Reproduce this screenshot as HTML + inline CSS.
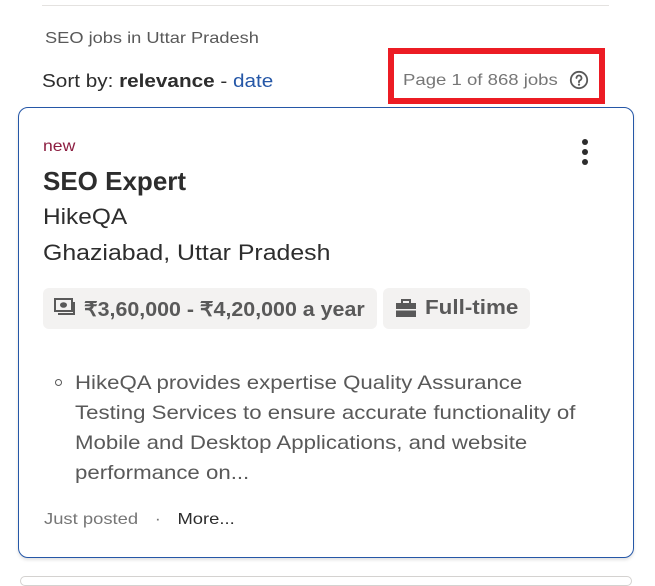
<!DOCTYPE html>
<html><head><meta charset="utf-8"><style>
*{margin:0;padding:0;box-sizing:border-box}
body{width:655px;height:579px;background:#fff;position:relative;overflow:hidden;font-family:"Liberation Sans",sans-serif;color:#2d2d2d}
.a{position:absolute;white-space:nowrap;transform-origin:0 0}
</style></head><body>
<div class="a" style="left:42px;top:5px;width:567px;height:1px;background:#e4e2e0"></div>
<div class="a" style="left:45px;top:30px;font-size:16px;color:#595959;transform:scaleX(1.14)">SEO jobs in Uttar Pradesh</div>
<div class="a" style="left:42px;top:71px;font-size:18px;color:#2d2d2d;transform:scaleX(1.15)">Sort by: <b>relevance</b> - <span style="color:#2557a7">date</span></div>
<div class="a" style="left:388px;top:48px;width:217px;height:56px;border:6px solid #ec1c24"></div>
<div class="a" style="left:403px;top:72px;font-size:16px;color:#767676;transform:scaleX(1.16)">Page 1 of 868 jobs</div>
<svg class="a" style="left:569px;top:70px" width="20" height="20" viewBox="0 0 20 20"><circle cx="10" cy="10" r="8.2" fill="none" stroke="#595959" stroke-width="1.8"/><path d="M7.5 8a2.5 2.5 0 1 1 3.5 2.3c-.7.3-1 .8-1 1.5v.4" fill="none" stroke="#595959" stroke-width="1.8" stroke-linecap="round"/><circle cx="10" cy="14.6" r="1.1" fill="#595959"/></svg>
<div class="a" style="left:18px;top:107px;width:616px;height:451px;border:1px solid #2557a7;border-radius:10px;box-shadow:0 2px 3px rgba(0,0,0,.12)"></div>
<div class="a" style="left:20px;top:576px;width:612px;height:10px;border:1px solid #d4d2d0;border-radius:10px"></div>
<div class="a" style="left:43px;top:138px;font-size:16px;color:#8c1d40;transform:scaleX(1.1)">new</div>
<div class="a" style="left:582px;top:139px"><div style="width:6px;height:6px;border-radius:3px;background:#2d2d2d;margin-bottom:4px"></div><div style="width:6px;height:6px;border-radius:3px;background:#2d2d2d;margin-bottom:4px"></div><div style="width:6px;height:6px;border-radius:3px;background:#2d2d2d"></div></div>
<div class="a" style="left:43px;top:166px;font-size:26px;font-weight:bold;color:#2d2d2d">SEO Expert</div>
<div class="a" style="left:43px;top:204px;font-size:22px;transform:scaleX(1.11)">HikeQA</div>
<div class="a" style="left:43px;top:240px;font-size:22px;transform:scaleX(1.13)">Ghaziabad, Uttar Pradesh</div>
<div class="a" style="left:43px;top:288px;width:334px;height:41px;background:#f3f2f1;border-radius:6px"></div>
<div class="a" style="left:383px;top:288px;width:147px;height:41px;background:#f3f2f1;border-radius:6px"></div>
<svg class="a" style="left:54px;top:298px" width="22" height="20" viewBox="0 0 22 20"><rect x="1" y="1" width="17" height="12" fill="none" stroke="#595959" stroke-width="2"/><ellipse cx="9.5" cy="7" rx="3.5" ry="2.8" fill="#595959"/><path d="M20 4v12H4" fill="none" stroke="#595959" stroke-width="2"/></svg>
<div class="a" style="left:84px;top:297px;font-size:20px;font-weight:bold;color:#595959;transform:scaleX(1.07)">₹3,60,000 - ₹4,20,000 a year</div>
<svg class="a" style="left:395px;top:298px" width="22" height="20" viewBox="0 0 22 20"><path d="M7 5V2h8v3" fill="none" stroke="#595959" stroke-width="2"/><rect x="1" y="5" width="20" height="14" fill="#595959"/><rect x="1" y="11" width="20" height="1.5" fill="#f3f2f1"/></svg>
<div class="a" style="left:425px;top:297px;font-size:20px;font-weight:bold;color:#595959;transform:scaleX(1.12)">Full-time</div>
<div class="a" style="left:55px;top:379px;width:7px;height:7px;border:1.2px solid #595959;border-radius:50%"></div>
<div class="a" style="left:75px;top:368px;font-size:19.5px;line-height:30px;color:#595959;transform:scaleX(1.14)">HikeQA provides expertise Quality Assurance<br>Testing Services to ensure accurate functionality of<br>Mobile and Desktop Applications, and website<br>performance on...</div>
<div class="a" style="left:44px;top:511px;font-size:16px;color:#767676;transform:scaleX(1.15)">Just posted <span style="margin:0 10px">·</span> <span style="color:#2d2d2d">More...</span></div>
</body></html>
